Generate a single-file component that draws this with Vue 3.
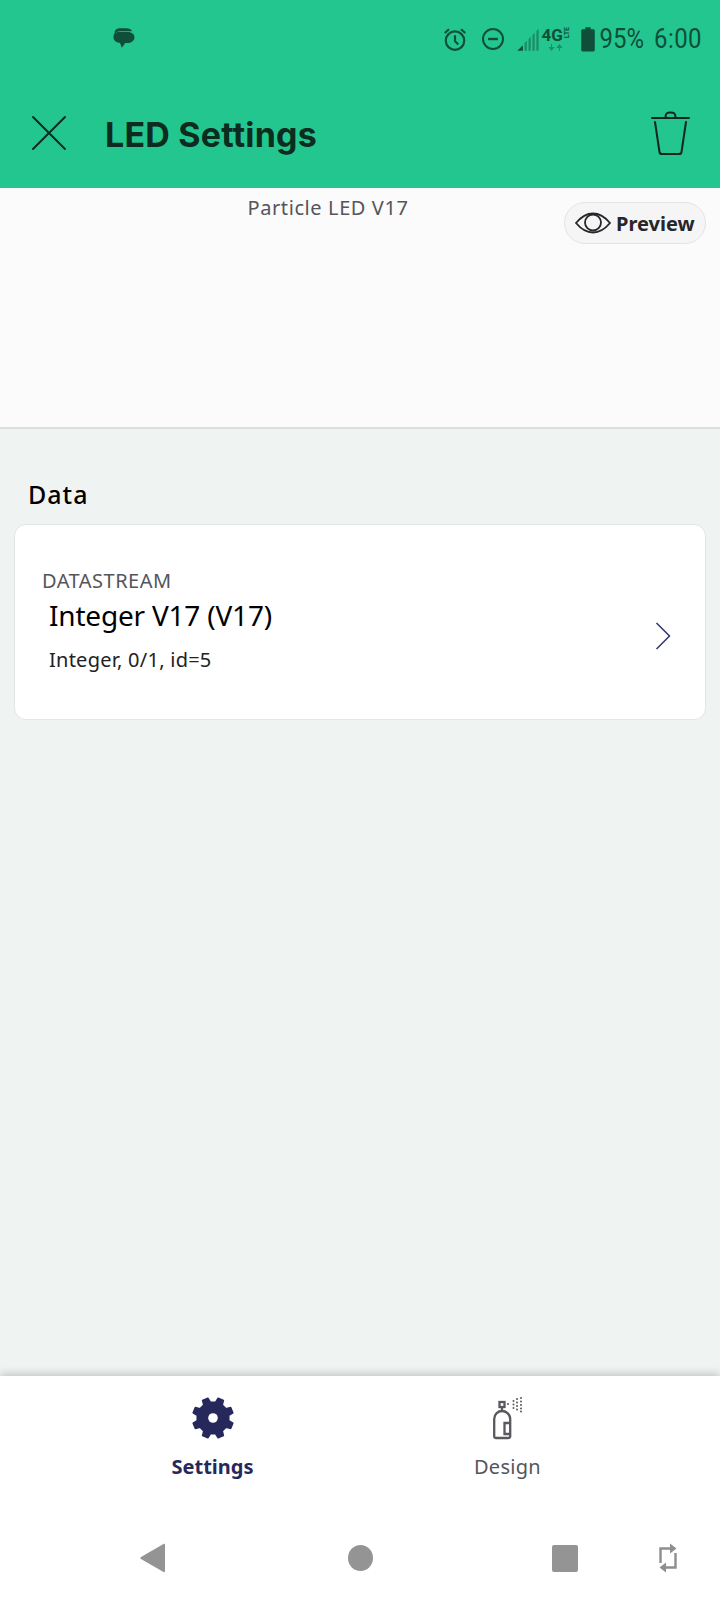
<template>
  <div class="screen">
    <header class="top">
      <div class="status">
        <svg class="chat" width="28" height="28" viewBox="0 0 24 24">
          <path d="M4 6.500C4 4 6 2.800 9 2.800h5c2.500 0 4.500 1 5 2.500H9C6 5.300 4.500 6.500 4 8.500z" fill="#0f4f3a" />
          <path d="M3 10c0-2.800 2.400-4 5-4h7c3 0 6 1.200 6 4.500S18 15.500 15 15.500h-2l-2.800 4-1.700-4.300C5 15 3 13 3 10z" fill="#0f4f3a" />
        </svg>
        <div class="status-right">
          <svg class="s-alarm" width="26" height="26" viewBox="0 0 24 24" fill="none" stroke="#0f4f3a" stroke-width="2">
            <circle cx="12" cy="13.500" r="8.500" />
            <path d="M12 8.500v5.500l3 3M2.500 6.500l4-3.500M21.500 6.500l-4-3.500" />
          </svg>
          <svg class="s-dnd" width="24" height="24" viewBox="0 0 24 24" fill="none" stroke="#0f4f3a" stroke-width="2">
            <circle cx="12" cy="12" r="10" />
            <path d="M7 12h10" stroke-width="2.400" />
          </svg>
          <svg class="s-signal" width="23" height="27" viewBox="0 0 20 24">
            <path d="M0 22l5-5v5z" fill="#0f4f3a" />
            <path d="M6.500 22v-7l2-2v9zM10 22V11.500l2-2V22zM13.500 22V8l2-2v16zM17 22V4.500l2-2V22z" fill="#1b8d68" />
          </svg>
          <div class="s-net">
            <div class="s-net-top"><span class="s-4g">4G</span><span class="s-lte">LTE</span></div>
            <svg width="16" height="7" viewBox="0 0 16 7">
              <path d="M3 0v3H.500L3.500 7 6.500 3H4V0zM12 7V4h2.500L11.500 0 8.500 4H11v3z" fill="#1b8d68" />
            </svg>
          </div>
          <svg class="s-batt" width="14" height="28" viewBox="0 0 13 24">
            <path d="M4 1h5v2h2.500c.8 0 1.300.5 1.300 1.300v18c0 .8-.5 1.200-1.300 1.200h-10C.7 23.500.2 23.100.2 22.300v-18C.2 3.500.7 3 1.500 3H4z" fill="#0f4f3a" />
          </svg>
          <span class="s-text">95%</span>
          <span class="s-text s-time">6:00</span>
        </div>
      </div>
      <div class="bar">
        <svg class="close" width="36" height="36" viewBox="0 0 36 36" fill="none" stroke="#0c2c20" stroke-width="2" stroke-linecap="round">
          <path d="M2 2l32 32M34 2L2 34" />
        </svg>
        <h1>LED Settings</h1>
        <svg class="trash" width="40" height="44" viewBox="0 0 40 44" fill="none" stroke="#14261f" stroke-width="2" stroke-linecap="round" stroke-linejoin="round">
          <path d="M1 7h37" />
          <path d="M14.500 7c0-5 1.500-5.500 5-5.500s5 .5 5 5.500" />
          <path d="M4 11l4.500 30c.2 1.500 1 2 2.500 2h17c1.500 0 2.300-.5 2.500-2L35 11" />
        </svg>
      </div>
    </header>

    <section class="preview">
      <div class="widget-name">Particle LED V17</div>
      <button class="preview-btn">
        <svg width="36" height="22" viewBox="0 0 36 22" fill="none" stroke="#26262b" stroke-width="1.800">
          <path d="M1 11C6 5 11 1.500 18 1.500S30 5 35 11c-5 6-10 9.500-17 9.500S6 17 1 11z" />
          <circle cx="18" cy="10.500" r="8" />
        </svg>
        <span>Preview</span>
      </button>
    </section>

    <main class="content">
      <h2>Data</h2>
      <div class="card">
        <div class="card-text">
          <div class="over">DATASTREAM</div>
          <div class="name">Integer V17 (V17)</div>
          <div class="meta">Integer, 0/1, id=5</div>
        </div>
        <svg class="chev" width="16" height="28" viewBox="0 0 16 28" fill="none" stroke="#33356b" stroke-width="1.500">
          <path d="M1.500 1l13 13-13 13" />
        </svg>
      </div>
    </main>

    <footer class="bottom">
      <nav class="tabs">
        <div class="tab active">
          <svg width="44" height="44" viewBox="0 0 44 44">
            <path :d="gearPath" fill="#26285c" stroke="#26285c" stroke-width="1.500" stroke-linejoin="round" />
            <circle cx="22" cy="22" r="4.800" fill="#fff" />
          </svg>
          <span>Settings</span>
        </div>
        <div class="tab">
          <svg width="44" height="44" viewBox="0 0 44 44" fill="none" stroke="#58585e" stroke-width="2.300">
            <rect x="13.500" y="6" width="5" height="5" />
            <path d="M16 11v4" />
            <path d="M8.200 23c0-5 4-8 7.800-8s8.200 3 8.200 8v17c0 1.500-.8 2-2 2H10.200c-1.200 0-2-.5-2-2z" />
            <path d="M24 27h-5.500v11H24" />
            <g fill="#58585e" stroke="none">
              <circle v-for="d in sprayDots" :key="d.x + '-' + d.y" :cx="d.x" :cy="d.y" r="1" />
            </g>
          </svg>
          <span>Design</span>
        </div>
      </nav>
      <div class="sysnav">
        <svg class="n-back" width="26" height="30" viewBox="0 0 26 30">
          <path d="M23.500 1c1-.5 1.500 0 1.500 1v26c0 1-.5 1.500-1.500 1L1 16c-1-.6-1-1.400 0-2z" fill="#949494" />
        </svg>
        <span class="n-home"></span>
        <span class="n-recent"></span>
        <svg class="n-rotate" width="18" height="32" viewBox="0 0 18 32" fill="none" stroke="#8e8e8e" stroke-width="2.400">
          <path d="M1.500 21V6.500H12" />
          <path d="M16.500 11v14.500H6" />
          <path d="M11 1.500l6.500 5-6.500 5zM7 20.500l-6.500 5 6.500 5z" fill="#8e8e8e" stroke="none" />
        </svg>
      </div>
    </footer>
  </div>
</template>

<script setup>
  // 8 teeth, first one at 22.5deg so that two of them sit on the top edge
  function buildGear() {
    const parts = [];
    for (let i = 0; i < 8; i++) {
      const mid = 22.5 + i * 45;
      const steps = [[-13, 16], [-8, 20.500], [8, 20.500], [13, 16]];
      for (const [offset, radius] of steps) {
        const angle = (mid + offset) * Math.PI / 180;
        parts.push((22 + radius * Math.cos(angle)).toFixed(2) + " " + (22 + radius * Math.sin(angle)).toFixed(2));
      }
    }
    return "M" + parts.join("L") + "z";
  }

  const gearPath = buildGear();

  const sprayDots = [
    { x: 22, y: 8 },
    { x: 27.500, y: 5 }, { x: 27.500, y: 8.500 }, { x: 27.500, y: 12 },
    { x: 31, y: 3 }, { x: 31, y: 6.500 }, { x: 31, y: 10 }, { x: 31, y: 13.500 },
    { x: 35, y: 2 }, { x: 35, y: 5.500 }, { x: 35, y: 9 }, { x: 35, y: 12.500 }, { x: 35, y: 15.500 },
  ];
</script>

<style>
  html, body {
    margin: 0;
    background: #eff3f2;
  }
</style>

<style scoped>
  .screen {
    width: 720px;
    height: 1600px;
    display: flex;
    flex-direction: column;
    font-family: "Noto Sans", "Open Sans", sans-serif;
    background: #eff3f2;
    overflow: hidden;
  }

  .top {
    height: 188px;
    background: #24c68f;
    flex: none;
  }

  .status {
    height: 78px;
    display: flex;
    justify-content: space-between;
    align-items: center;
    box-sizing: border-box;
    padding: 0 18px 0 110px;
  }

  .status-right {
    display: flex;
    align-items: center;
    color: #0f4f3a;
  }

  .s-alarm {
    margin-right: 13px;
  }

  .s-dnd {
    margin-right: 12px;
  }

  .s-signal {
    margin-right: 3px;
  }

  .s-net {
    width: 27px;
    margin-right: 11px;
    display: flex;
    flex-direction: column;
    align-items: center;
  }

  .s-net-top {
    display: flex;
    align-items: flex-start;
    height: 17px;
    font-family: "Roboto", sans-serif;
    font-weight: 700;
  }

  .s-4g {
    font-size: 17px;
    line-height: 17px;
  }

  .s-lte {
    font-size: 7px;
    line-height: 7px;
    writing-mode: vertical-rl;
    transform: rotate(180deg);
    margin-left: 1px;
  }

  .s-batt {
    margin-right: 5px;
  }

  .s-text {
    display: inline-block;
    font-family: "Roboto", sans-serif;
    font-size: 24px;
    line-height: 28px;
    transform: scaleY(1.12);
  }

  .s-time {
    margin-left: 10px;
    letter-spacing: 0.4px;
  }

  .bar {
    height: 110px;
    display: flex;
    align-items: center;
    box-sizing: border-box;
    padding: 0 29px 0 31px;
  }

  .close {
    margin-top: -1px;
  }

  h1 {
    flex: 1;
    margin: 2px 0 0 38px;
    font-family: "Inter", sans-serif;
    font-size: 34px;
    font-weight: 700;
    letter-spacing: 0.2px;
    color: #0c2c20;
  }

  .preview {
    height: 241px;
    flex: none;
    position: relative;
    box-sizing: border-box;
    background: #fbfbfb;
    border-bottom: 2px solid #dcdedd;
  }

  .widget-name {
    padding: 5px 64px 0 0;
    text-align: center;
    font-size: 20px;
    line-height: 30px;
    letter-spacing: 0.6px;
    color: #55555b;
  }

  .preview-btn {
    position: absolute;
    top: 14px;
    right: 14px;
    display: flex;
    align-items: center;
    gap: 5px;
    width: 142px;
    height: 42px;
    padding: 0 0 0 10px;
    box-sizing: border-box;
    border: 1.500px solid #e4e4e4;
    border-radius: 21px;
    background: #f5f5f5;
    font-family: inherit;
    font-size: 20px;
    font-weight: 700;
    color: #26262b;
  }

  .content {
    flex: 1;
    padding: 0 14px;
  }

  h2 {
    margin: 48px 0 0 14px;
    height: 47px;
    font-size: 25px;
    line-height: 34px;
    font-weight: 500;
    letter-spacing: 1px;
    color: #000;
  }

  .card {
    height: 196px;
    box-sizing: border-box;
    display: flex;
    align-items: center;
    justify-content: space-between;
    padding: 0 34px 0 27px;
    background: #fff;
    border: 1.500px solid #e2e6e5;
    border-radius: 12px;
  }

  .card-text {
    margin-top: -3px;
  }

  .over {
    font-size: 20px;
    line-height: 28px;
    letter-spacing: 0.5px;
    color: #55555b;
  }

  .name {
    margin: 1px 0 0 7px;
    font-size: 28px;
    line-height: 38px;
    letter-spacing: -0.2px;
    color: #000;
  }

  .meta {
    margin: 12px 0 0 7px;
    font-size: 20px;
    line-height: 28px;
    letter-spacing: 0.25px;
    color: #222;
  }

  .chev {
    margin-top: 28px;
  }

  .bottom {
    height: 224px;
    flex: none;
    background: #fff;
    box-shadow: 0 -2px 8px rgba(0, 0, 0, 0.2);
    position: relative;
  }

  .tabs {
    height: 130px;
    display: flex;
    justify-content: center;
  }

  .tab {
    width: 295px;
    display: flex;
    flex-direction: column;
    align-items: center;
    padding-top: 20px;
    box-sizing: border-box;
    font-size: 20px;
    line-height: 28px;
    color: #55555b;
    letter-spacing: 0.3px;
  }

  .tab span {
    margin-top: 13px;
  }

  .tab.active {
    font-weight: 700;
    color: #26285c;
    letter-spacing: 0;
  }

  .sysnav {
    height: 94px;
    box-sizing: border-box;
    padding-top: 10px;
    display: flex;
    align-items: center;
  }

  .n-back {
    margin-left: 140px;
  }

  .n-home {
    width: 25px;
    height: 26px;
    margin-left: 182px;
    border-radius: 50%;
    background: #949494;
  }

  .n-recent {
    width: 26px;
    height: 27px;
    margin-left: 179px;
    border-radius: 2px;
    background: #949494;
  }

  .n-rotate {
    margin-left: 81px;
  }
</style>
